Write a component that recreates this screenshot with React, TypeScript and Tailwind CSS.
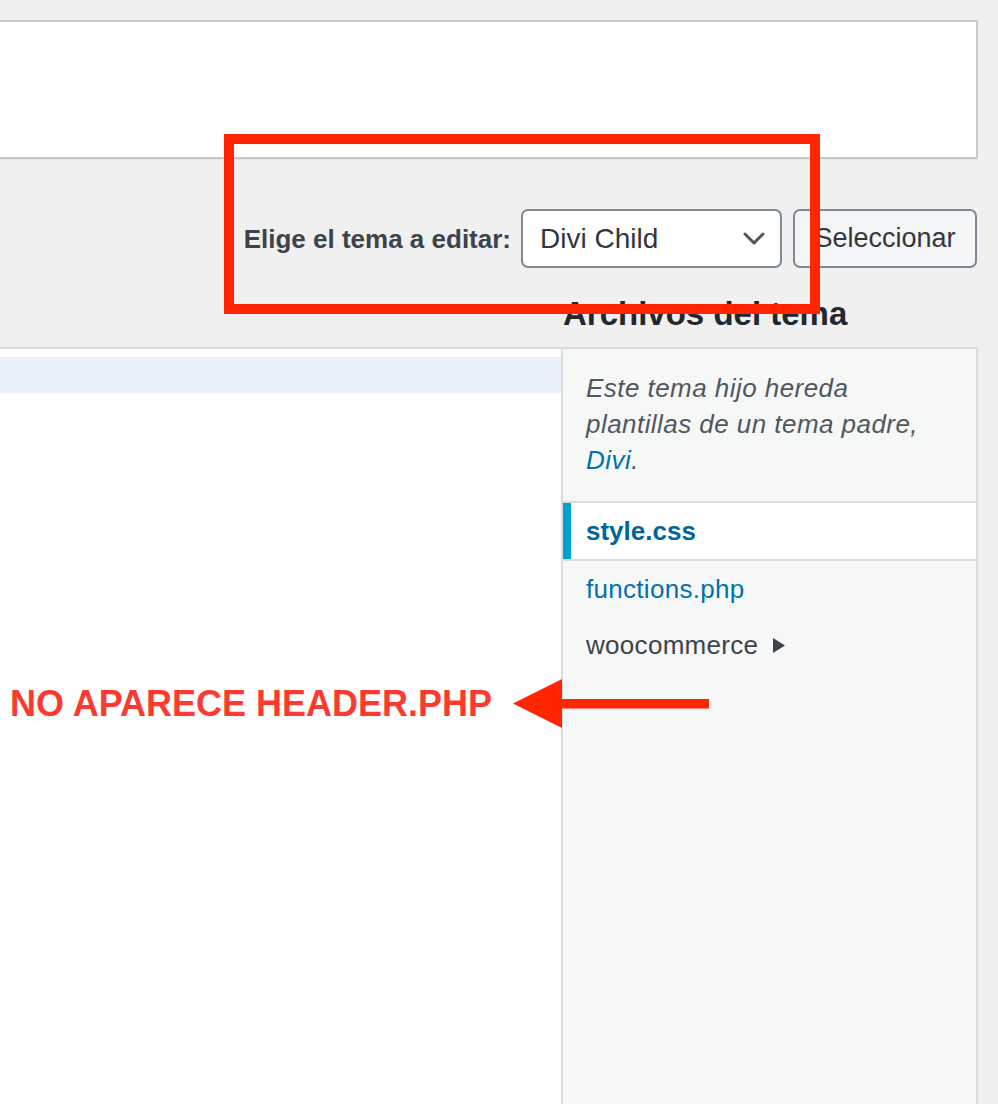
import React from "react";

export default function App() {
  const font = { fontFamily: '"Liberation Sans", Arial, sans-serif' };
  return (
    <div
      className="relative w-[998px] h-[1104px] overflow-hidden bg-[#f0f0f1] flex flex-col pt-[20px]"
      style={font}
    >
      {/* top white box */}
      <div className="h-[139px] ml-[-4px] mr-[20px] bg-white border-2 border-[#c8cacd] shadow-[0_1px_1px_rgba(0,0,0,0.04)]" />

      {/* theme chooser row */}
      <div className="mt-[50px] h-[59px] flex items-center justify-end pr-[21px]">
        <span className="text-[26px] font-bold text-[#3c434a] mr-[10px] leading-none">
          Elige el tema a editar:
        </span>
        <div className="w-[261px] h-[59px] bg-white border-2 border-[#7e8993] rounded-[7px] flex items-center justify-between pl-[17px] pr-[15px]">
          <span className="text-[28px] text-[#32373c] leading-none">Divi Child</span>
          <svg width="22" height="13" viewBox="0 0 22 13" fill="none">
            <polyline points="2,2 11,11 20,2" stroke="#50575e" strokeWidth="3" strokeLinecap="round" strokeLinejoin="round" />
          </svg>
        </div>
        <button className="ml-[11px] w-[184px] h-[59px] bg-[#f3f5f6] border-2 border-[#7e8993] rounded-[7px] text-[27px] text-[#32373c] leading-none flex items-center justify-center">
          Seleccionar
        </button>
      </div>

      {/* heading + main grid */}
      <div className="grid grid-cols-[561px_417px] grid-rows-[auto_1fr] mt-[28px] flex-1">
        <div />
        <h2 className="h-[36px] mb-[15px] pl-[2px] text-[33px] leading-[36px] font-bold text-[#23282d]">
          Archivos del tema
        </h2>

        {/* editor */}
        <div className="bg-white border-t-2 border-[#dcdcde] pt-[8px]">
          <div className="h-[36px] bg-[#e8f1fc]" />
        </div>

        {/* sidebar */}
        <div className="bg-[#f6f7f7] border-2 border-b-0 border-[#dcdcde] pt-[21px]">
          <p className="pl-[23px] pr-[20px] text-[26px] leading-[36px] italic text-[#50575e] tracking-[0.45px]">
            Este tema hijo hereda
            <br />
            plantillas de un tema padre,
            <br />
            <span className="text-[#0073aa]">Divi</span>.
          </p>
          <ul className="mt-[23px]">
            <li className="relative h-[60px] bg-white border-y-2 border-[#dcdcde] flex items-center pl-[23px]">
              <span className="absolute left-0 top-0 bottom-0 w-[8px] bg-[#00a0d2]" />
              <span className="text-[26px] font-bold text-[#00669b] leading-none">style.css</span>
            </li>
            <li className="h-[56px] flex items-center pl-[23px]">
              <span className="text-[26px] text-[#0073aa] leading-none tracking-[0.3px]">functions.php</span>
            </li>
            <li className="h-[56px] flex items-center pl-[23px]">
              <span className="text-[26px] text-[#3c434a] leading-none tracking-[0.3px]">woocommerce</span>
              <svg className="ml-[15px]" width="12" height="15" viewBox="0 0 12 15">
                <polygon points="0,0 12,7.5 0,15" fill="#3c434a" />
              </svg>
            </li>
          </ul>
        </div>
      </div>

      {/* annotations */}
      <div className="absolute left-[10px] top-[684px] text-[36px] font-bold leading-[40px] text-[#fd3a2f]">
        NO APARECE HEADER.PHP
      </div>
      <svg className="absolute left-[513px] top-[679px]" width="196" height="49" viewBox="0 0 196 49">
        <polygon points="0,24.5 49,0 49,49" fill="#ff2600" />
        <rect x="48" y="20" width="148" height="9.5" fill="#ff2600" />
      </svg>
      <div className="absolute left-[224px] top-[134px] w-[596px] h-[180px] border-[10px] border-[#ff2600]" />
    </div>
  );
}
